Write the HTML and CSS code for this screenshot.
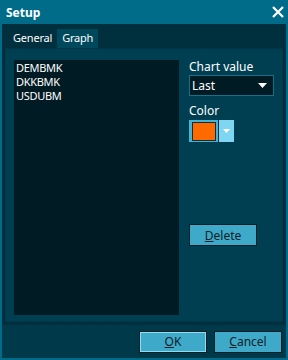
FILE: index.html
```html
<!DOCTYPE html>
<html lang="en">
<head>
  <meta charset="UTF-8">
  <title>Setup</title>
  <link rel="stylesheet" href="styles.css">
</head>
<body>
  <div class="window">
    <div class="titlebar">
      <span class="title">Setup</span>
      <svg class="close" width="12" height="12" viewBox="0 0 12 12">
        <path d="M1 1 L11 11 M11 1 L1 11" stroke="#fff" stroke-width="2.2" fill="none"/>
      </svg>
    </div>
    <div class="content">
      <div class="tabs">
        <div class="tabrow">
          <span class="tab">General</span>
          <span class="tab active">Graph</span>
        </div>
        <div class="page">
          <div class="list">
            <div>DEMBMK</div>
            <div>DKKBMK</div>
            <div>USDUBM</div>
          </div>
          <div class="side">
            <label class="lbl">Chart value</label>
            <div class="combo">
              <span>Last</span>
              <svg width="9" height="5" viewBox="0 0 9 5"><path d="M0 0 H9 L4.5 5 Z" fill="#fff"/></svg>
            </div>
            <label class="lbl color-lbl">Color</label>
            <div class="colorpick">
              <span class="swatch-frame"><span class="swatch"></span></span>
              <span class="drop">
                <svg width="7" height="4" viewBox="0 0 7 4"><path d="M0 0 H7 L3.5 4 Z" fill="#fff"/></svg>
              </span>
            </div>
            <button class="btn delete"><u>D</u>elete</button>
          </div>
        </div>
      </div>
      <div class="footer">
        <button class="btn ok"><u>O</u>K</button>
        <button class="btn"><u>C</u>ancel</button>
      </div>
    </div>
  </div>
</body>
</html>
```

FILE: styles.css
```css
body {
  margin: 0;
  font-family: "Noto Sans", "DejaVu Sans", sans-serif;
  font-size: 11px;
  background-color: #006c8a;
  color: #ffffff;
}

.window {
  width: 288px;
  height: 360px;
  box-sizing: border-box;
  padding: 0 2px 2px 2px;
  background-color: #006c8a;
  display: flex;
  flex-direction: column;
}

.titlebar {
  height: 24px;
  display: flex;
  align-items: center;
  justify-content: space-between;
  padding: 0 2px 0 4px;
}

.title {
  font-weight: bold;
  font-size: 12px;
}

.content {
  flex: 1;
  background-color: #003a4a;
  display: flex;
  flex-direction: column;
}

.tabs {
  height: 298px;
  background-color: #002f3e;
  padding: 0 3px 3px 3px;
  display: flex;
  flex-direction: column;
}

.tabrow {
  height: 24px;
  display: flex;
  align-items: flex-end;
  padding-left: 3px;
}

.tab {
  height: 19px;
  line-height: 18px;
  padding: 0 5px;
  font-size: 11px;
  letter-spacing: -0.2px;
}

.tab.active {
  background-color: #00485c;
}

.page {
  flex: 1;
  background-color: #003f51;
  border: 1px solid #00364a;
  display: flex;
  padding: 11px 4px 6px 8px;
}

.list {
  width: 165px;
  background-color: #011b25;
  padding: 1px 2px;
  box-sizing: border-box;
  line-height: 14px;
  font-size: 11px;
  letter-spacing: -0.3px;
}

.side {
  margin-left: 10px;
  display: flex;
  flex-direction: column;
  align-items: flex-start;
}

.lbl {
  font-size: 12px;
  line-height: 14px;
}

.combo {
  margin-top: 1px;
  width: 85px;
  height: 21px;
  box-sizing: border-box;
  border: 1px solid #16708c;
  background-color: #011b25;
  display: flex;
  align-items: center;
  justify-content: space-between;
  padding: 0 6px 0 2px;
  font-size: 12px;
}

.color-lbl {
  margin-top: 8px;
}

.colorpick {
  margin-top: 2px;
  display: flex;
  height: 22px;
}

.swatch-frame {
  width: 29px;
  background-color: #43b4d8;
  display: flex;
  align-items: center;
  justify-content: center;
}

.swatch {
  width: 22px;
  height: 17px;
  background-color: #ff6a00;
  border: 1px solid #1b2a30;
}

.drop {
  width: 15px;
  background-color: #7ed6f2;
  border-left: 1px solid #13303a;
  display: flex;
  align-items: center;
  justify-content: center;
}

.btn {
  font-family: "Noto Sans", "DejaVu Sans", sans-serif;
  font-size: 12px;
  color: #0a1e26;
  background-color: #3fa9c9;
  border: 1px solid #0a1e26;
  width: 68px;
  height: 22px;
  padding: 0;
}

.delete {
  margin-top: 82px;
}

.footer {
  flex: 1;
  display: flex;
  justify-content: flex-end;
  align-items: center;
  gap: 7px;
  padding-right: 4px;
}

.ok {
  box-shadow: inset 0 0 0 1px #8fdcf2;
}
```
